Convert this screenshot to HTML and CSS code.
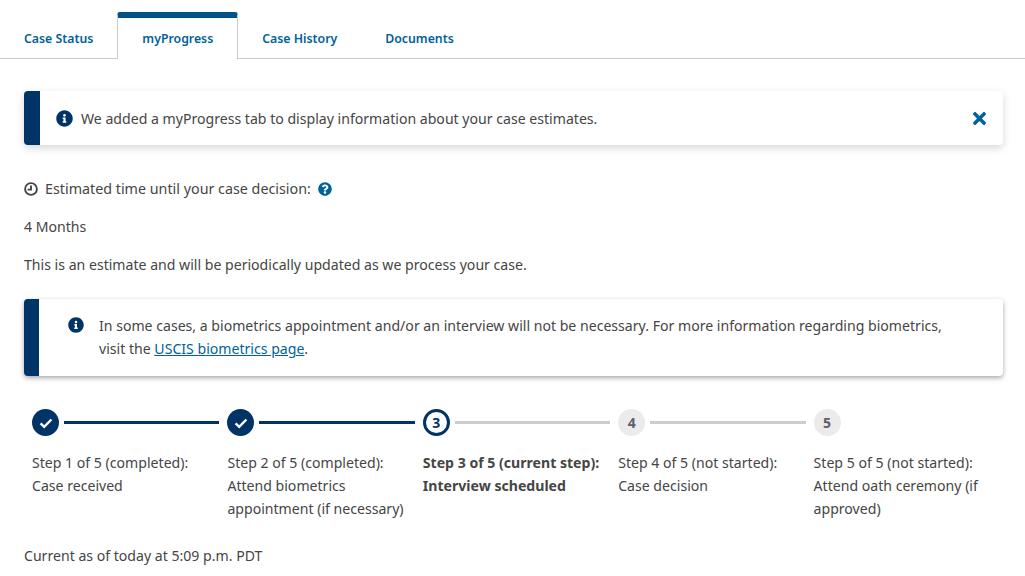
FILE: index.html
```html
<!DOCTYPE html>
<html lang="en">
<head>
    <meta charset="UTF-8">
    <title>myProgress</title>
    <link rel="stylesheet" href="styles.css">
</head>
<body>
    <svg class="defs" width="0" height="0">
        <symbol id="i-info" viewBox="0 0 512 512"><path d="M256 8C119.043 8 8 119.083 8 256c0 136.997 111.043 248 248 248s248-111.003 248-248C504 119.083 392.957 8 256 8zm0 110c23.196 0 42 18.804 42 42s-18.804 42-42 42-42-18.804-42-42 18.804-42 42-42zm56 254c0 6.627-5.373 12-12 12h-88c-6.627 0-12-5.373-12-12v-24c0-6.627 5.373-12 12-12h12v-64h-12c-6.627 0-12-5.373-12-12v-24c0-6.627 5.373-12 12-12h64c6.627 0 12 5.373 12 12v100h12c6.627 0 12 5.373 12 12v24z"/></symbol>
    </svg>

    <ul class="tabs">
        <li class="tab">Case Status</li>
        <li class="tab tab-active">myProgress</li>
        <li class="tab">Case History</li>
        <li class="tab">Documents</li>
    </ul>

    <div class="content">
        <div class="alert alert-top">
            <svg class="alert-icon"><use href="#i-info"/></svg>
            <p class="alert-text">We added a myProgress tab to display information about your case estimates.</p>
            <svg class="close" viewBox="0 0 352 512"><path d="M242.72 256l100.07-100.07c12.28-12.28 12.28-32.19 0-44.48l-22.24-22.24c-12.28-12.28-32.19-12.28-44.48 0L176 189.28 75.93 89.21c-12.28-12.28-32.19-12.28-44.48 0L9.21 111.45c-12.28 12.28-12.28 32.19 0 44.48L109.28 256 9.21 356.07c-12.28 12.28-12.28 32.19 0 44.48l22.24 22.24c12.28 12.28 32.2 12.28 44.48 0L176 322.72l100.07 100.07c12.28 12.28 32.2 12.28 44.48 0l22.24-22.24c12.28-12.28 12.28-32.19 0-44.48L242.72 256z"/></svg>
        </div>

        <div class="estimate">
            <svg class="clock" viewBox="0 0 14 14"><circle cx="7" cy="7" r="5.9"/><path d="M7 3.4V7.6H3.6"/></svg>
            <span>Estimated time until your case decision:</span>
            <svg class="help" viewBox="0 0 512 512"><path d="M504 256c0 136.997-111.043 248-248 248S8 392.997 8 256C8 119.083 119.043 8 256 8s248 111.083 248 248zM262.655 90c-54.497 0-89.255 22.957-116.549 63.758-3.536 5.286-2.353 12.415 2.715 16.258l34.699 26.31c5.205 3.947 12.621 3.008 16.665-2.122 17.864-22.658 30.113-35.797 57.303-35.797 20.429 0 45.698 13.148 45.698 32.958 0 14.976-12.363 22.667-32.534 33.976C247.128 238.528 216 254.941 216 296v4c0 6.627 5.373 12 12 12h56c6.627 0 12-5.373 12-12v-1.333c0-28.462 83.186-29.647 83.186-106.667 0-58.002-60.165-102-116.531-102zM256 338c-25.365 0-46 20.635-46 46 0 25.364 20.635 46 46 46s46-20.636 46-46c0-25.365-20.635-46-46-46z"/></svg>
        </div>
        <p class="line">4 Months</p>
        <p class="line">This is an estimate and will be periodically updated as we process your case.</p>

        <div class="alert alert-bio">
            <svg class="alert-icon"><use href="#i-info"/></svg>
            <p class="alert-text">In some cases, a biometrics appointment and/or an interview will not be necessary. For more information regarding biometrics, visit the <a href="#">USCIS biometrics page</a>.</p>
        </div>

        <ol class="steps">
            <li class="step step-done">
                <div class="step-head">
                    <span class="dot"><svg viewBox="0 0 16 16"><path d="M2.6 8.4l3.6 3.5 7.2-7.4"/></svg></span>
                    <span class="bar"></span>
                </div>
                <p>Step 1 of 5 (completed): Case received</p>
            </li>
            <li class="step step-done">
                <div class="step-head">
                    <span class="dot"><svg viewBox="0 0 16 16"><path d="M2.6 8.4l3.6 3.5 7.2-7.4"/></svg></span>
                    <span class="bar"></span>
                </div>
                <p>Step 2 of 5 (completed): Attend biometrics appointment (if necessary)</p>
            </li>
            <li class="step step-current">
                <div class="step-head">
                    <span class="dot">3</span>
                    <span class="bar"></span>
                </div>
                <p>Step 3 of 5 (current step): Interview scheduled</p>
            </li>
            <li class="step">
                <div class="step-head">
                    <span class="dot">4</span>
                    <span class="bar"></span>
                </div>
                <p>Step 4 of 5 (not started): Case decision</p>
            </li>
            <li class="step">
                <div class="step-head">
                    <span class="dot">5</span>
                </div>
                <p>Step 5 of 5 (not started): Attend oath ceremony (if approved)</p>
            </li>
        </ol>

        <p class="updated">Current as of today at 5:09 p.m. PDT</p>
    </div>
</body>
</html>
```

FILE: styles.css
```css
body {
    font-family: "Noto Sans", Arial, sans-serif;
    font-size: 14.1px;
    line-height: 23px;
    margin: 0;
    padding: 0;
    background-color: #fff;
    color: #454545;
}
.defs {
    position: absolute;
}
p {
    margin: 0;
}

.tabs {
    display: flex;
    list-style: none;
    margin: 0;
    padding: 12px 0 0;
    height: 46px;
    border-bottom: 1px solid #ccc;
}
.tab {
    padding: 15px 24px 0;
    font-size: 12.3px;
    font-weight: 600;
    color: #00629b;
}
.tab-active {
    height: 47px;
    box-sizing: border-box;
    padding: 9px 24px 0;
    background-color: #fff;
    border: 1px solid #ccc;
    border-top: 6px solid #005288;
    border-bottom: none;
    border-radius: 3px 3px 0 0;
}

.content {
    padding: 32px 22px 0 24px;
}
.alert {
    display: flex;
    background-color: #fff;
    border-radius: 4px;
    border-left: 16px solid #003366;
}
.alert-top {
    height: 54px;
    align-items: center;
    padding: 0 17px 0 16px;
    box-shadow: 0 3px 8px rgba(0, 0, 0, 0.16);
}
.alert-icon {
    width: 17px;
    height: 17px;
    flex: none;
    fill: #003366;
}
.alert-text {
    flex: 1;
    margin-left: 8px;
}
.close {
    width: 13px;
    height: 19px;
    fill: #00629b;
}
.estimate {
    display: flex;
    align-items: center;
    margin-top: 32px;
    font-size: 14.3px;
}
.clock {
    width: 14px;
    height: 14px;
    margin-right: 7px;
    fill: none;
    stroke: #454545;
    stroke-width: 1.9;
}
.help {
    width: 14px;
    height: 14px;
    margin-left: 7px;
    fill: #00629b;
}
.line {
    margin-top: 15px;
}
.alert-bio {
    margin-top: 23px;
    height: 77px;
    box-sizing: border-box;
    padding: 15px 50px 0 29px;
    border-left-width: 15px;
    box-shadow: 0 2px 5px rgba(0, 0, 0, 0.35);
}
.alert-bio .alert-icon {
    margin-top: 3px;
    width: 16px;
    height: 16px;
}
.alert-bio .alert-text {
    margin-left: 15px;
}
.alert-text a {
    color: #00629b;
}

.steps {
    display: grid;
    grid-template-columns: repeat(5, 1fr);
    list-style: none;
    margin: 33px 2px 0 0;
    padding: 0;
}
.step {
    padding-left: 8px;
}
.step-head {
    display: flex;
    align-items: center;
    gap: 5px;
    margin-bottom: 15px;
}
.dot {
    display: flex;
    align-items: center;
    justify-content: center;
    box-sizing: border-box;
    width: 27px;
    height: 27px;
    flex: none;
    border-radius: 50%;
    background-color: #ebebeb;
    color: #5b616b;
    font-weight: 700;
    font-size: 14px;
}
.dot svg {
    width: 16px;
    height: 16px;
    fill: none;
    stroke: #fff;
    stroke-width: 2.4;
}
.bar {
    flex: 1;
    height: 3px;
    background-color: #ccc;
}
.step-done .dot {
    background-color: #003366;
}
.step-done .bar {
    background-color: #003366;
}
.step-current .dot {
    background-color: #fff;
    border: 3px solid #003366;
    color: #003366;
}
.step-current p {
    font-weight: 700;
}
.updated {
    margin-top: 24px;
}
```
